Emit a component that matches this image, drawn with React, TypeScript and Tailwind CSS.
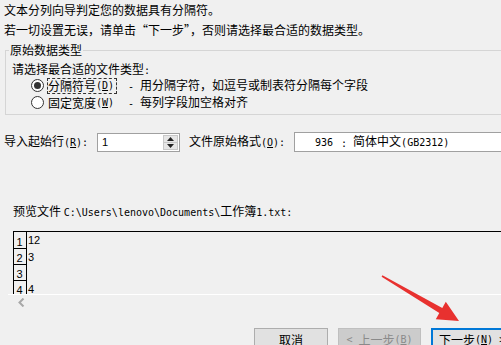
import type { ReactNode } from "react";

// Half-width Latin text, like the SimSun ASCII glyphs in the dialog
function A({ children }: { children: ReactNode }) {
    return <span className="font-['DejaVu_Sans_Mono',monospace] text-[10px]">{children}</span>;
}

// Accelerator key: "(D)" with the letter underlined
function Key({ k }: { k: string }) {
    return (
        <A>
            (<span className="underline underline-offset-1">{k}</span>)
        </A>
    );
}

function Radio({ checked }: { checked?: boolean }) {
    return (
        <span className="flex h-[13px] w-[13px] shrink-0 items-center justify-center rounded-full border border-[#333] bg-white">
            {checked && <span className="h-[7px] w-[7px] rounded-full bg-[#333]" />}
        </span>
    );
}

function SpinButtons() {
    return (
        <div className="my-[1px] mr-[1px] flex w-[15px] shrink-0 flex-col border border-[#c8c8c8] bg-[#e6e6e6]">
            <div className="flex flex-1 items-center justify-center border-b border-[#c8c8c8]">
                <svg width="7" height="4" viewBox="0 0 7 4">
                    <path d="M0 4 L3.5 0 L7 4 Z" fill="#222" />
                </svg>
            </div>
            <div className="flex flex-1 items-center justify-center">
                <svg width="7" height="4" viewBox="0 0 7 4">
                    <path d="M0 0 L3.5 4 L7 0 Z" fill="#222" />
                </svg>
            </div>
        </div>
    );
}

const rows = [
    { n: "1", text: "12", h: "h-[17px]" },
    { n: "2", text: "3", h: "h-[16px]" },
    { n: "3", text: "", h: "h-[16px]" },
    { n: "4", text: "4", h: "h-[16px]" },
];

export default function App() {
    return (
        <div className="relative h-[345px] w-[501px] overflow-hidden bg-[#f0f0f0] font-['Noto_Sans_CJK_SC',sans-serif] text-[12px] text-black">
            {/* intro text */}
            <div className="ml-[4px] mt-[3px] h-[14px] whitespace-nowrap leading-[14px]">文本分列向导判定您的数据具有分隔符。</div>
            <div className="ml-[4px] mt-[6px] h-[14px] whitespace-nowrap leading-[14px]">
                若一切设置无误，请单击“下一步”，否则请选择最合适的数据类型。
            </div>

            {/* 原始数据类型 group box */}
            <fieldset className="ml-[5px] mt-[6px] w-[520px] border border-[#d5d5d5] pb-[3px] pl-[6px]">
                <legend className="-ml-[3px] h-[14px] px-[1px] leading-[14px]">原始数据类型</legend>
                <div className="mt-[5px] h-[14px] whitespace-nowrap leading-[14px]">
                    请选择最合适的文件类型<A>:</A>
                </div>
                <div className="mt-[1px] flex h-[17px] items-center whitespace-nowrap pl-[19px]">
                    <Radio checked />
                    <span className="ml-[3px] flex h-[16px] w-[70px] shrink-0 items-center border border-dashed border-[#333] leading-[14px]">
                        分隔符号<Key k="D" />
                    </span>
                    <span className="ml-[11px] leading-[14px]">
                        <A>-&nbsp;</A>用分隔字符，如逗号或制表符分隔每个字段
                    </span>
                </div>
                <div className="flex h-[17px] items-center whitespace-nowrap pl-[19px]">
                    <Radio />
                    <span className="ml-[3px] flex h-[16px] w-[70px] shrink-0 items-center border border-dashed border-transparent leading-[14px]">
                        固定宽度<Key k="W" />
                    </span>
                    <span className="ml-[11px] leading-[14px]">
                        <A>-&nbsp;</A>每列字段加空格对齐
                    </span>
                </div>
            </fieldset>

            {/* start row + origin encoding */}
            <div className="mt-[17px] flex h-[20px] items-center whitespace-nowrap">
                <span className="ml-[4px] w-[93px] shrink-0 leading-[14px]">
                    导入起始行<Key k="R" />
                    <A>:</A>
                </span>
                <div className="flex h-[19px] w-[83px] shrink-0 border border-[#a0a0a0] bg-white">
                    <span className="flex-1 pl-[4px] font-['Liberation_Sans',sans-serif] text-[11px] leading-[17px]">1</span>
                    <SpinButtons />
                </div>
                <span className="ml-[9px] w-[105px] shrink-0 leading-[14px]">
                    文件原始格式<Key k="O" />
                    <A>:</A>
                </span>
                <div className="flex h-[20px] w-[220px] shrink-0 items-center border border-[#a0a0a0] bg-white pl-[20px]">
                    <A>936</A>
                    <span className="ml-[8px]">
                        <A>:</A>
                    </span>
                    <span className="ml-[6px] leading-[14px]">
                        简体中文<A>(GB2312)</A>
                    </span>
                </div>
            </div>

            {/* preview */}
            <div className="ml-[13px] mt-[52px] h-[14px] whitespace-nowrap leading-[14px]">
                预览文件 <A>C:\Users\lenovo\Documents\</A>工作簿<A>1.txt:</A>
            </div>
            <div className="ml-[13px] mt-[13px] h-[63px] w-[500px] overflow-hidden border-l border-t border-black">
                {rows.map((r) => (
                    <div key={r.n} className={`flex ${r.h}`}>
                        <div className="flex w-[13px] shrink-0 items-end justify-center border-b border-r border-black pr-[1px] font-['Liberation_Sans',sans-serif] text-[11px] leading-[12px]">
                            {r.n}
                        </div>
                        <div className="flex items-center pl-[1px] font-['Liberation_Sans',sans-serif] text-[11px]">{r.text}</div>
                    </div>
                ))}
            </div>
            <div className="ml-[8px] h-[1px] bg-white" />

            {/* horizontal scrollbar left arrow */}
            <div className="flex h-[33px] items-start pl-[18px] pt-[3px]">
                <svg width="7" height="9" viewBox="0 0 7 9">
                    <path d="M5.5 0.5 L1.5 4.5 L5.5 8.5" fill="none" stroke="#a8a8a8" strokeWidth="2" />
                </svg>
            </div>

            {/* wizard buttons */}
            <div className="ml-[254px] flex gap-[10px] whitespace-nowrap">
                <button className="flex h-[23px] w-[74px] shrink-0 items-center justify-center border border-[#adadad] bg-[#e1e1e1] leading-[14px]">
                    取消
                </button>
                <button className="flex h-[23px] w-[83px] shrink-0 items-center justify-center border border-[#bfbfbf] bg-[#cccccc] leading-[14px] text-[#8a8a8a]">
                    <A>&lt;&nbsp;</A>上一步<Key k="B" />
                </button>
                <button className="flex h-[23px] w-[80px] shrink-0 items-center border-2 border-[#0078d7] bg-[#e1e1e1] pl-[6px] leading-[14px]">
                    下一步<Key k="N" />
                    <A>&nbsp;&gt;</A>
                </button>
            </div>

            {/* red annotation arrow over the dialog */}
            <svg className="pointer-events-none absolute inset-0" width="501" height="345" viewBox="0 0 501 345">
                <polygon
                    points="382.4,275.3 442.3,307.9 445.8,301.8 459,321 435.8,319.2 439.3,313.1 381.6,276.7"
                    fill="#e8312f"
                />
            </svg>
        </div>
    );
}
